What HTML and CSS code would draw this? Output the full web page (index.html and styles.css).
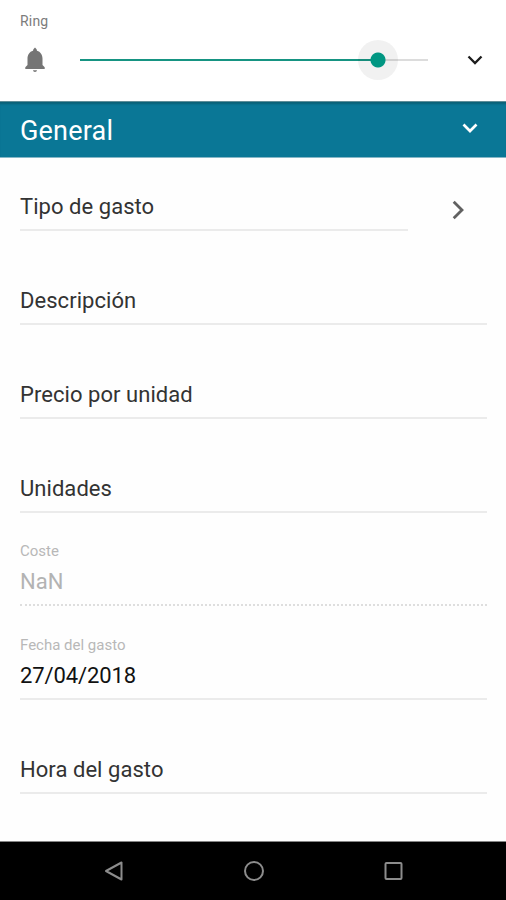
FILE: index.html
```
<!DOCTYPE html>
<html lang="es">
<head>
  <meta charset="UTF-8">
  <meta name="viewport" content="width=device-width, initial-scale=1.0">
  <title>Gasto</title>
  <link rel="stylesheet" href="styles.css">
</head>
<body>
  <!-- volume panel -->
  <div class="volume">
    <div class="volume-label"><span>Ring</span></div>
    <div class="volume-row">
      <svg class="bell" viewBox="0 0 22 26">
        <path d="M11 .5L9.400 2.200 9 3.700C5.500 4.700 3.500 7.800 3.500 11.500V18L1.300 20.300V22h19.400v-1.700L18.500 18v-6.500c0-3.700-2-6.800-5.500-7.800l-.4-1.500zM9 23.300c.2 1.100.9 1.700 2 1.700s1.800-.6 2-1.700z" fill="#757575"/>
      </svg>
      <div class="slider">
        <div class="slider-fill"></div>
        <div class="slider-thumb"></div>
      </div>
      <svg class="volume-arrow" viewBox="0 0 16 10">
        <path d="M1.500 1.500L8 8l6.500-6.500" fill="none" stroke="#1d1d1d" stroke-width="2.300"/>
      </svg>
    </div>
  </div>

  <!-- section header -->
  <div class="section-header">
    <h1>General</h1>
    <svg class="section-arrow" viewBox="0 0 16 11">
      <path d="M1.500 1.500L8 8l6.500-6.500" fill="none" stroke="#fff" stroke-width="2.700"/>
    </svg>
  </div>

  <!-- form -->
  <div class="form">
    <div class="field-row">
      <div class="field">
        <span class="field-text">Tipo de gasto</span>
      </div>
      <svg class="next" viewBox="0 0 13 20">
        <path d="M1.700 1.700L10 10l-8.300 8.300" fill="none" stroke="#616161" stroke-width="2.800"/>
      </svg>
    </div>
    <div class="field">
      <span class="field-text">Descripción</span>
    </div>
    <div class="field">
      <span class="field-text">Precio por unidad</span>
    </div>
    <div class="field">
      <span class="field-text">Unidades</span>
    </div>
    <div class="field disabled">
      <span class="field-label">Coste</span>
      <span class="field-text">NaN</span>
    </div>
    <div class="field filled">
      <span class="field-label">Fecha del gasto</span>
      <span class="field-text">27/04/2018</span>
    </div>
    <div class="field">
      <span class="field-text">Hora del gasto</span>
    </div>
  </div>

  <!-- android navigation bar -->
  <div class="nav-bar">
    <svg viewBox="0 0 22 22">
      <path d="M18.500 2.500v17L3 11z" fill="none" stroke="#8c8c8c" stroke-width="2" stroke-linejoin="round"/>
    </svg>
    <svg viewBox="0 0 22 22">
      <circle cx="11" cy="11" r="9" fill="none" stroke="#8c8c8c" stroke-width="2"/>
    </svg>
    <svg viewBox="0 0 22 22">
      <rect x="2.500" y="3" width="16" height="16" rx="1" fill="none" stroke="#8c8c8c" stroke-width="2"/>
    </svg>
  </div>
</body>
</html>
```

FILE: styles.css
```
* {
  box-sizing: border-box;
}

body {
  margin: 0;
  height: 900px;
  overflow: hidden;
  display: flex;
  flex-direction: column;
  background-color: #fefefe;
  font-family: Roboto, sans-serif;
  color: #333;
}

svg {
  display: block;
  flex: none;
}

.volume {
  height: 101px;
  padding: 11px 23px 0 20px;
  background-color: #fff;
}

.volume-label {
  height: 21px;
  font-size: 14px;
  line-height: 20px;
  letter-spacing: 0.2px;
  color: #7c7c7c;
}

.volume-row {
  display: flex;
  align-items: center;
  height: 56px;
}

.bell {
  width: 22px;
  height: 26px;
  margin-left: 4px;
}

.slider {
  position: relative;
  width: 348px;
  height: 2px;
  margin-left: 34px;
  background-color: #dcdcdc;
}

.slider-fill {
  width: 298px;
  height: 2px;
  background-color: #169482;
}

/* thumb with its touch halo */
.slider-thumb {
  position: absolute;
  left: 278px;
  top: -19px;
  width: 40px;
  height: 40px;
  border-radius: 50%;
  background: radial-gradient(circle, #009682 7px, rgba(0, 0, 0, 0.055) 8px);
}

.volume-arrow {
  width: 16px;
  height: 10px;
  margin-left: 39px;
}

.section-header {
  display: flex;
  justify-content: space-between;
  height: 57px;
  padding: 0 28px 0 20px;
  background-color: #0a7796;
  border-top: 1px solid #5f8d98;
  border-bottom: 1px solid #86b7c7;
  box-shadow: inset 0 3px 2px -1px #0b6178;
  color: #fff;
}

.section-header h1 {
  margin: 0;
  font-size: 27px;
  font-weight: 400;
  line-height: 58px;
  letter-spacing: 0.2px;
}

.section-arrow {
  width: 16px;
  height: 11px;
  margin-top: 21px;
}

.form {
  flex: 1;
  padding: 0 19px 0 20px;
}

.field-row {
  display: flex;
  margin-top: -20.5px;
}

.field-row .field {
  width: 388px;
}

.next {
  width: 13px;
  height: 20px;
  margin: 62.5px 0 0 44px;
}

.field {
  display: flex;
  flex-direction: column;
  justify-content: flex-end;
  height: 93.8px;
  border-bottom: 2px solid #ebebeb;
}

.field-text {
  font-size: 22px;
  line-height: 26px;
  letter-spacing: 0.05px;
  margin-bottom: 9px;
}

.field-label {
  font-size: 15px;
  line-height: 18px;
  margin-bottom: 9.500px;
  color: #b8b8b8;
}

.disabled {
  border-bottom: 2px dotted #dedede;
  color: #b3b3b3;
}

.filled {
  color: #111;
}

.filled .field-text {
  letter-spacing: -0.1px;
}

.nav-bar {
  display: flex;
  align-items: center;
  justify-content: center;
  gap: 118px;
  height: 59px;
  padding-left: 1px;
  border-top: 1px solid #858585;
  background-color: #000;
}

.nav-bar svg {
  width: 22px;
  height: 22px;
}
```
